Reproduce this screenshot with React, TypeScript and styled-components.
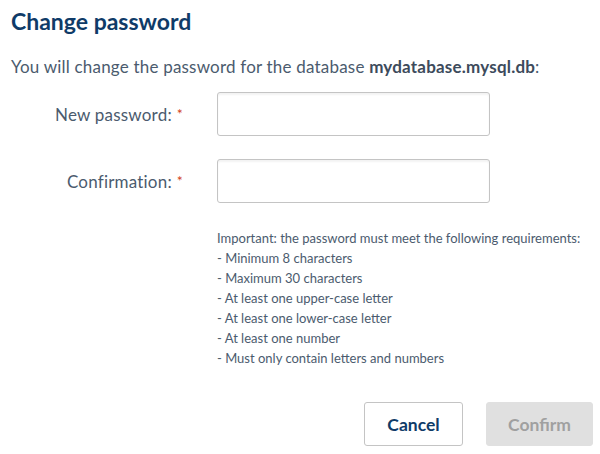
import React from 'react';
import styled, { createGlobalStyle } from 'styled-components';

const GlobalStyle = createGlobalStyle`
  html, body {
    margin: 0;
    padding: 0;
    background: #ffffff;
  }
  body {
    font-family: Lato, "Open Sans", sans-serif;
  }
`;

const Dialog = styled.div`
  width: 600px;
  height: 454px;
  box-sizing: border-box;
  padding: 7px 7px 0 11px;
  display: flex;
  flex-direction: column;
`;

const Title = styled.h1`
  margin: 0;
  font-size: 23px;
  line-height: 28px;
  font-weight: 700;
  color: #0f3b68;
`;

const Intro = styled.p`
  margin: 21px 0 0;
  font-size: 17px;
  letter-spacing: 0.2px;
  line-height: 22px;
  color: #4b5b6e;

  strong {
    font-weight: 700;
    color: #3d4b5c;
  }
`;

const Form = styled.div`
  margin-top: 14px;
  display: grid;
  grid-template-columns: 172px 273px;
  column-gap: 34px;
  row-gap: 23px;
  align-items: center;
`;

const Label = styled.label`
  text-align: right;
  font-size: 17px;
  letter-spacing: 0.2px;
  color: #4b5b6e;
`;

const Required = styled.span`
  color: #d2421c;
  margin-left: 5px;
  font-size: 14px;
  vertical-align: 2px;
`;

const Input = styled.input`
  box-sizing: border-box;
  width: 273px;
  height: 44px;
  border: 1px solid #c4c4c4;
  border-radius: 3px;
  box-shadow: inset 0 2px 2px rgba(0, 0, 0, 0.05);
  padding: 0 10px;
  font-size: 16px;
  outline: none;
`;

const Requirements = styled.div`
  margin: 25px 0 0 206px;
  font-size: 13px;
  line-height: 20px;
  color: #4b5b6e;
`;

const Actions = styled.div`
  margin-top: auto;
  margin-bottom: 8px;
  display: flex;
  justify-content: flex-end;
  gap: 23px;
`;

const Button = styled.button<{ $primary?: boolean }>`
  box-sizing: border-box;
  height: 44px;
  padding: 0;
  width: ${(p) => (p.$primary ? '107px' : '99px')};
  border-radius: 3px;
  font-family: Lato, "Open Sans", sans-serif;
  font-size: 17.5px;
  font-weight: 700;
  border: 1px solid ${(p) => (p.$primary ? '#e0e0e0' : '#c4c4c4')};
  background: ${(p) => (p.$primary ? '#e0e0e0' : '#ffffff')};
  color: ${(p) => (p.$primary ? '#a0a0a0' : '#0f3b68')};
`;

const requirements = [
  'Important: the password must meet the following requirements:',
  '- Minimum 8 characters',
  '- Maximum 30 characters',
  '- At least one upper-case letter',
  '- At least one lower-case letter',
  '- At least one number',
  '- Must only contain letters and numbers',
];

export default function App() {
  return (
    <>
      <GlobalStyle />
      <Dialog>
        <Title>Change password</Title>
        <Intro>
          You will change the password for the database <strong>mydatabase.mysql.db</strong>:
        </Intro>
        <Form>
          <Label htmlFor="pw">
            New password:<Required>*</Required>
          </Label>
          <Input id="pw" type="password" />
          <Label htmlFor="pw2">
            Confirmation:<Required>*</Required>
          </Label>
          <Input id="pw2" type="password" />
        </Form>
        <Requirements>
          {requirements.map((line) => (
            <div key={line}>{line}</div>
          ))}
        </Requirements>
        <Actions>
          <Button>Cancel</Button>
          <Button $primary disabled>
            Confirm
          </Button>
        </Actions>
      </Dialog>
    </>
  );
}
